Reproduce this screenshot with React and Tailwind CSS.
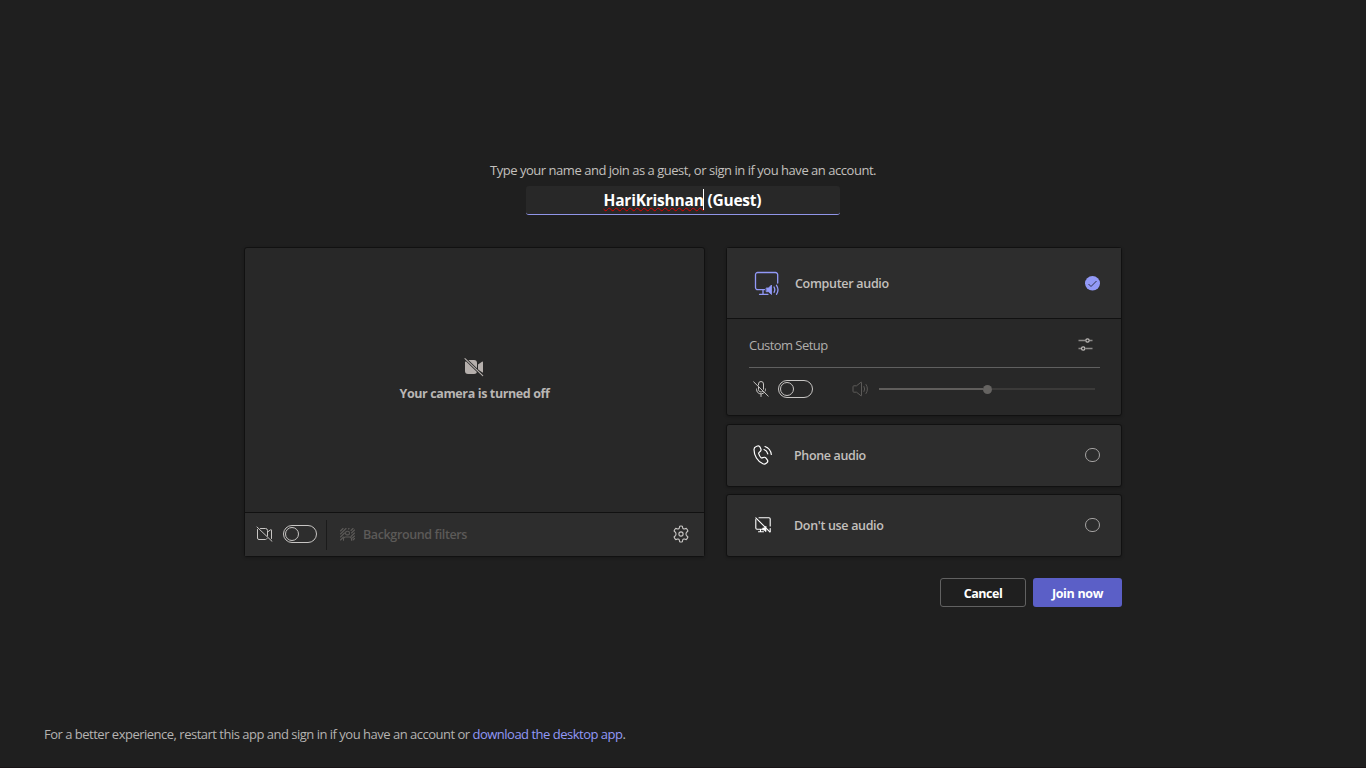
import React from "react";

const svgProps = {
  fill: "none",
  stroke: "currentColor",
  strokeLinecap: "round",
  strokeLinejoin: "round",
};

function CameraOff({ className }) {
  return (
    <svg {...svgProps} width="17" height="16" viewBox="0 0 17 16" strokeWidth="1" className={className}>
      <path d="M4.500 2.500h5a2 2 0 0 1 2 2v4.800M11 12.600a2 2 0 0 1-1.500.900H3a1.500 1.500 0 0 1-1.500-1.500v-8.500" />
      <path d="M11.500 6l3.300-2.300c.3-.2.7 0 .7.400v8.400M11.500 6v4" />
      <path d="M1 1l15 14.300" />
    </svg>
  );
}

function CameraOffFilled() {
  return (
    <svg width="20" height="20" viewBox="0 0 20 20" fill="#b5afac">
      <path d="M3.500 2H10a3 3 0 0 1 3 3v8a3 3 0 0 1-3 3H4a3 3 0 0 1-3-3V4z" />
      <path d="M14 6.500l4-2.800c.5-.3 1 0 1 .5v10.500l-5-3z" />
      <path d="M1 .5l18 17.500" stroke="#282828" strokeWidth="2.600" />
      <path d="M1 .7l17.700 17" stroke="#b5afac" strokeWidth="1.100" strokeLinecap="round" />
    </svg>
  );
}

function BackgroundIcon() {
  return (
    <svg {...svgProps} width="15" height="13" viewBox="0 0 15 13" strokeWidth="1.100">
      <path d="M.5 3L3 .5M.5 6L6 .5M.5 9l4-4M.5 12l3-3M8.500 1l.5-.5M11 2.500l2-2M11.500 5l3-3M11 8.500l3.500-3.500M12.500 10l2-2M13 12l1.500-1.500" />
      <rect x="5.600" y="3.300" width="3.800" height="3.600" rx="1.400" />
      <path d="M3.500 12.300v-1.500a1.800 1.800 0 0 1 1.800-1.800h4.400a1.800 1.800 0 0 1 1.800 1.800v1.500" />
    </svg>
  );
}

function Gear() {
  return (
    <svg {...svgProps} width="16" height="18" viewBox="0 0 16 18" strokeWidth="1.100">
      <path d="M6.700 1.200Q8 .8 9.300 1.200L9.800 3.300Q10.200 4.200 11.200 4L13.300 3.400Q14.400 4.400 14.900 6L13.300 7.700Q12.600 9 13.300 10.300L14.900 12Q14.400 13.600 13.300 14.600L11.200 14Q10.200 13.800 9.800 14.700L9.300 16.800Q8 17.200 6.700 16.800L6.200 14.700Q5.800 13.800 4.800 14L2.700 14.600Q1.600 13.600 1.100 12L2.700 10.300Q3.400 9 2.700 7.700L1.100 6Q1.600 4.400 2.700 3.400L4.800 4Q5.800 4.200 6.200 3.300Z" />
      <circle cx="8" cy="9" r="2.100" />
    </svg>
  );
}

function ComputerAudio() {
  return (
    <svg {...svgProps} width="26" height="26" viewBox="0 0 26 26" strokeWidth="1.300">
      <path d="M10.500 18.600H3.700a2.200 2.200 0 0 1-2.200-2.200V3.700a2.200 2.200 0 0 1 2.200-2.200h17.800a2.200 2.200 0 0 1 2.200 2.200V12M9 18.600v4.600M5.500 23.300h8.500" />
      <path d="M12.500 17h2l3-3v9.500l-3-2.800h-2z" fill="currentColor" strokeWidth=".8" />
      <path d="M20 16q1.600 2.700 0 5.300M22.500 14.300q3 4.500 0 9" />
    </svg>
  );
}

function MicOff() {
  return (
    <svg {...svgProps} width="16" height="16" viewBox="0 0 16 16" strokeWidth="1">
      <path d="M5.500 4V3a2.500 2.500 0 0 1 5 0v5.200M5.500 6v2.500a2.500 2.500 0 0 0 4 2M3.500 8v.5a4.500 4.500 0 0 0 7.500 3.300M12.500 8v.5q0 .8-.3 1.600M8 13v2.500" />
      <path d="M.7.900l14.500 14.200" />
    </svg>
  );
}

function Speaker() {
  return (
    <svg {...svgProps} width="17" height="16" viewBox="0 0 17 16" strokeWidth="1">
      <path d="M1 5.500q0-.7.700-.7h2.800L9 1.200q.5-.4.500.3v13q0 .7-.5.300l-4.500-3.600H1.700q-.7 0-.7-.7zM12 5.500q1.500 2.500 0 5M14 3.500q3 4.500 0 9" />
    </svg>
  );
}

function Sliders() {
  return (
    <svg width="15" height="13" viewBox="0 0 15 13" fill="none" stroke="#c0bdbb">
      <path d="M.5 2.500h6.500M11.500 2.500h3M.5 10.500h2.500M7.500 10.500h7" stroke="#8c8a89" strokeWidth="1.600" />
      <circle cx="9.500" cy="2.500" r="1.700" strokeWidth="1.200" />
      <circle cx="5.200" cy="10.500" r="1.700" strokeWidth="1.200" />
    </svg>
  );
}

function PhoneIcon() {
  return (
    <svg {...svgProps} width="20" height="20" viewBox="0 0 20 20" strokeWidth="1.200">
      <path d="M3.200 1.500l1.400-.5c1-.3 2 .1 2.400 1l.9 2c.3.800.1 1.700-.5 2.300L6 7.600c-.3.300-.4.700-.3 1.100.4 1.500 1.200 2.900 2.300 4 .3.300.700.4 1.100.2l1.700-.5c.8-.3 1.700 0 2.200.7l1.300 1.800c.6.800.5 1.900-.2 2.600l-.9.800c-.9.800-2.200 1-3.300.5C4.500 16.500 1 10.500 1 4.500c0-1.400.9-2.600 2.200-3z" />
      <path d="M11 4.500c2 .7 3.300 2.200 3.800 4.300M12 1.500c3.500 1.200 5.800 4 6.300 8" />
    </svg>
  );
}

function NoAudio() {
  return (
    <svg {...svgProps} width="16" height="16" viewBox="0 0 16 16" strokeWidth="1.100">
      <path d="M4 .8h10a1.200 1.200 0 0 1 1.200 1.200v7M8 12.200H2A1.200 1.200 0 0 1 .8 11V2.500M5.500 12.200v2.600M3.500 14.800h5M15.200 11.500v3.300" />
      <path d="M8 11h1.200l1.800-1.800v5.500l-2-1.700H8z" fill="currentColor" strokeWidth=".7" />
      <path d="M.8.800l14 14" />
    </svg>
  );
}

function Toggle({ className }) {
  return (
    <span className={"mb-px flex h-[18px] items-center rounded-full border border-[#c8c6c4] pl-px " + className}>
      <span className="h-[14px] w-[14px] rounded-full border border-[#c8c6c4]" />
    </span>
  );
}

function AudioOption({ icon, label, labelClass }) {
  return (
    <div className="flex h-[63px] items-center rounded-[3px] border border-[#111111] bg-[#2d2d2d] pr-[21px] pb-px pl-[26px] shadow-[0_1px_3px_rgba(0,0,0,0.25)]">
      <span className="flex w-[41px] text-white">{icon}</span>
      <span className={"pt-px text-[12.5px] font-semibold " + labelClass}>{label}</span>
      <span className="ml-auto h-[14px] w-[15px] rounded-full border border-[#a5a3a2]" />
    </div>
  );
}

export default function App() {
  return (
    <div className="flex h-[768px] w-[1366px] flex-col overflow-hidden border-b border-[#191416] bg-[#1f1f1f] font-['Open_Sans','Noto_Sans',sans-serif] text-[12.5px] leading-[18px] whitespace-nowrap text-[#c3c0be]">
      <header className="flex flex-col items-center pt-[161px]">
        <p className="text-[13px] tracking-[-0.47px]">Type your name and join as a guest, or sign in if you have an account.</p>
        <div className="mt-[7px] flex h-[29px] w-[314px] items-center justify-center rounded-[3px] border-b border-[#9095e8] bg-[#282828] pr-px text-[15.5px] font-bold tracking-[-0.22px] text-white">
          <span className="underline decoration-[#e00000] decoration-wavy decoration-1 underline-offset-[0.5px] [text-decoration-skip-ink:none]">HariKrishnan</span>
          <span className="mb-px -ml-px h-[21px] w-px bg-white" />
          <span className="whitespace-pre"> (Guest)</span>
        </div>
      </header>

      <main className="mt-8 ml-[244px] flex w-[878px] justify-between">
        <section className="flex h-[310px] w-[461px] flex-col rounded-[3px] border border-[#111111] bg-[#282828] shadow-[0_1px_3px_rgba(0,0,0,0.25)]">
          <div className="flex h-[264px] flex-col items-center pt-[110px]">
            <span className="mr-0.5"><CameraOffFilled /></span>
            <p className="mt-[7px] text-[12.5px] font-bold tracking-[-0.38px] text-[#b9b6b4]">Your camera is turned off</p>
          </div>
          <div className="flex grow items-center border-t border-[#111111] bg-[#2d2d2d] pr-[15px] pl-[11px]">
            <CameraOff className="mb-px text-[#c8c6c4]" />
            <Toggle className="ml-[10px] w-[34px]" />
            <span className="ml-[9px] h-[30px] w-px bg-[#1b1b1b]" />
            <div className="ml-[13px] flex items-center gap-[8px] text-[#5c5a58]">
              <BackgroundIcon />
              <span className="font-semibold tracking-[-0.38px]">Background filters</span>
            </div>
            <span className="mb-px ml-auto text-[#c8c6c4]"><Gear /></span>
          </div>
        </section>

        <section className="flex w-[396px] flex-col">
          <div className="flex h-[169px] flex-col rounded-[3px] border border-[#111111] bg-[#282828] shadow-[0_1px_3px_rgba(0,0,0,0.25)]">
            <div className="flex h-[71px] items-center border-b border-[#111111] bg-[#2d2d2d] pr-[21px] pl-[27px]">
              <span className="flex pt-0.5 text-[#9299f7]"><ComputerAudio /></span>
              <span className="ml-[15px] pt-[2px] font-semibold tracking-[-0.3px]">Computer audio</span>
              <svg className="ml-auto" width="15" height="15" viewBox="0 0 15 15" fill="none">
                <ellipse cx="7.500" cy="7.300" rx="7.500" ry="7.200" fill="#9299f7" />
                <path d="M3.500 8l2.500 2.500L11.500 5" stroke="#30324c" strokeWidth="1" />
              </svg>
            </div>
            <div className="mx-[22px] mr-[21px] flex h-[49px] items-center justify-between border-b border-[#606060] pt-[3px] pr-[7px]">
              <span className="pt-px text-[13px] tracking-[-0.55px] text-[#b0aeac]">Custom Setup</span>
              <Sliders />
            </div>
            <div className="flex h-[43px] items-center pl-[26px]">
              <span className="mb-px text-[#c8c6c4]"><MicOff /></span>
              <Toggle className="ml-[9px] w-[35px]" />
              <span className="mb-px ml-[39px] text-[#5c5a58]"><Speaker /></span>
              <div className="mb-px ml-[10px] flex w-[216px] items-center">
                <span className="h-0.5 w-[104px] bg-[#605e5c]" />
                <span className="h-[9px] w-[9px] rounded-full bg-[#656361]" />
                <span className="h-0.5 grow bg-[#3b3a39]" />
              </div>
            </div>
          </div>
          <div className="mt-2 flex flex-col gap-[7px]">
            <AudioOption icon={<PhoneIcon />} label="Phone audio" labelClass="tracking-[-0.36px]" />
            <AudioOption icon={<span className="ml-0.5"><NoAudio /></span>} label="Don't use audio" labelClass="tracking-[-0.33px]" />
          </div>
        </section>
      </main>

      <div className="mt-[21px] ml-[940px] flex w-[182px] justify-between text-[12.5px] font-bold text-white">
        <button className="h-[29px] w-[86px] rounded-[3px] border border-[#616161] pt-[2px] tracking-[-0.45px]">Cancel</button>
        <button className="h-[29px] w-[89px] rounded-[3px] bg-[#5b5fc7] pt-[2px] tracking-[-0.32px]">Join now</button>
      </div>

      <footer className="mt-[118px] ml-[44px] text-[13px] tracking-[-0.5px] text-[#b5b3b1]">
        For a better experience, restart this app and sign in if you have an account or <a className="text-[#9299f7]">download the desktop app</a>.
      </footer>
    </div>
  );
}
